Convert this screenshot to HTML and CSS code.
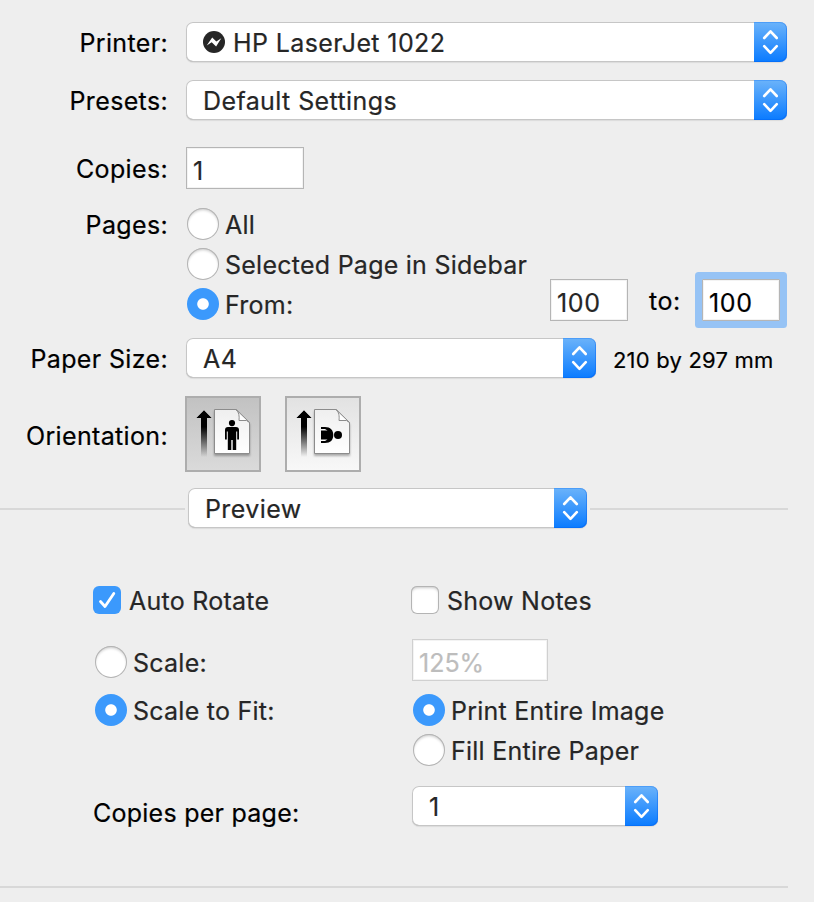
FILE: index.html
```html
<!DOCTYPE html>
<html lang="en">

<head>
    <meta charset="UTF-8">
    <meta name="viewport" content="width=device-width, initial-scale=1.0">
    <title>Print</title>
    <link rel="stylesheet" href="styles.css">
</head>

<body>

    <!-- Shared shapes -->
    <svg class="defs" width="0" height="0">
        <defs>
            <linearGradient id="fade" x1="0" y1="0" x2="0" y2="1">
                <stop offset="0.35" stop-color="#000"/>
                <stop offset="1" stop-color="#000" stop-opacity="0"/>
            </linearGradient>
            <linearGradient id="paper" x1="0" y1="0" x2="0" y2="1">
                <stop offset="0" stop-color="#efefef"/>
                <stop offset="1" stop-color="#fff"/>
            </linearGradient>
            <symbol id="arrows" viewBox="0 0 33 40">
                <path d="M10.2 16 L16.5 9.3 L22.8 16 M10.2 24.2 L16.5 30.9 L22.8 24.2" fill="none" stroke="#fff" stroke-width="2.6" stroke-linecap="round" stroke-linejoin="round"/>
            </symbol>
            <symbol id="page" viewBox="0 0 72 72">
                <path d="M17 12.5 L24.5 20 H20 V59 H14 V20 H9.5 Z" fill="url(#fade)"/>
                <path d="M9.7 20 L17 12.5 L24.3 20 Z"/>
                <path class="sheet" d="M27.5 11.5 H49 L62.5 24.5 V55.5 H27.5 Z" fill="url(#paper)" stroke="#8c8c8c"/>
                <path d="M49 11.5 C52 14 52.5 18 52 22.5 H59.5 L62.5 24.5 Z" fill="#fff" stroke="#8c8c8c" stroke-linejoin="round"/>
            </symbol>
            <symbol id="person" viewBox="0 0 14 30">
                <circle cx="7" cy="3.1" r="3.1"/>
                <path d="M3 7 H11 Q14 7 14 10 V19.5 H12.2 V11.5 H11.2 V30 H7.7 V20 H6.3 V30 H2.8 V11.5 H1.8 V19.5 H0 V10 Q0 7 3 7 Z"/>
            </symbol>
        </defs>
    </svg>

    <form class="dialog">
        <div class="row printer">
            <span class="label">Printer:</span>
            <div class="popup wide">
                <svg class="badge" width="22" height="22" viewBox="0 0 22 22">
                    <circle cx="11" cy="11" r="11" fill="#262626"/>
                    <path d="M3.7 14.4 L9.2 6.4 L13.3 10.4 L18.3 7.3 L13.1 15.5 L8.7 11.3 Z" fill="#fff"/>
                </svg>
                <span class="value">HP LaserJet 1022</span>
                <svg class="cap"><use href="#arrows"/></svg>
            </div>
        </div>

        <div class="row presets">
            <span class="label">Presets:</span>
            <div class="popup wide">
                <span class="value">Default Settings</span>
                <svg class="cap"><use href="#arrows"/></svg>
            </div>
        </div>

        <div class="row copies">
            <span class="label">Copies:</span>
            <input type="text" class="field copies-field" value="1">
        </div>

        <div class="row pages">
            <span class="label">Pages:</span>
            <div class="choices">
                <label class="choice"><input type="radio" name="pages"><span>All</span></label>
                <label class="choice selected-page"><input type="radio" name="pages"><span>Selected Page in Sidebar</span></label>
                <div class="range">
                    <label class="choice"><input type="radio" name="pages" checked><span>From:</span></label>
                    <input type="text" class="field range-field" value="100">
                    <span class="to">to:</span>
                    <input type="text" class="field range-field focused" value="100">
                </div>
            </div>
        </div>

        <div class="row paper">
            <span class="label">Paper Size:</span>
            <div class="popup paper-popup">
                <span class="value">A4</span>
                <svg class="cap"><use href="#arrows"/></svg>
            </div>
            <span class="size">210 by 297 mm</span>
        </div>

        <div class="row orientation">
            <span class="label">Orientation:</span>
            <button type="button" class="orient active">
                <svg width="72" height="72" viewBox="0 0 72 72">
                    <use href="#page"/>
                    <use href="#person" x="38" y="22" width="14" height="30"/>
                </svg>
            </button>
            <button type="button" class="orient">
                <svg width="72" height="72" viewBox="0 0 72 72">
                    <use href="#page"/>
                    <circle cx="51" cy="37" r="4"/>
                    <path d="M34 29 H38 C43.5 29 46.3 32 46.3 37 C46.3 42 43.5 45 38 45 H34 V43 H38 L40.5 41.4 H34 V32.6 H40.5 L38 31 H34 Z"/>
                </svg>
            </button>
        </div>

        <div class="divider">
            <span class="line line-left"></span>
            <div class="popup pane-popup">
                <span class="value">Preview</span>
                <svg class="cap"><use href="#arrows"/></svg>
            </div>
            <span class="line line-right"></span>
        </div>

        <div class="options">
            <div class="left">
                <label class="choice check"><input type="checkbox" checked><svg class="tick" viewBox="0 0 28 28"><path d="M7.5 15.5 L12 20.5 L20.8 7.5"/></svg><span>Auto Rotate</span></label>
                <label class="choice scale"><input type="radio" name="scale"><span>Scale:</span></label>
                <label class="choice fit"><input type="radio" name="scale" checked><span>Scale to Fit:</span></label>
                <span class="per-page">Copies per page:</span>
            </div>
            <div class="right">
                <label class="choice check"><input type="checkbox"><span>Show Notes</span></label>
                <input type="text" class="field scale-field" value="125%" disabled>
                <label class="choice entire"><input type="radio" name="fill" checked><span>Print Entire Image</span></label>
                <label class="choice fill"><input type="radio" name="fill"><span>Fill Entire Paper</span></label>
                <div class="popup count-popup">
                    <span class="value">1</span>
                    <svg class="cap"><use href="#arrows"/></svg>
                </div>
            </div>
        </div>

        <div class="footer-line"></div>
    </form>

</body>

</html>
```
FILE: styles.css
```css
* {
    box-sizing: border-box;
}

body {
    margin: 0;
    background-color: #eeeeee;
    color: #262626;
    font-family: Inter, "Liberation Sans", sans-serif;
    font-size: 25px;
    line-height: 30px;
    letter-spacing: 0.25px;
    white-space: nowrap;
    -webkit-text-stroke: 0.2px;
}

.defs {
    display: block;
}

.dialog {
    width: 814px;
    height: 902px;
    padding-top: 22px;
    overflow: hidden;
}

.row {
    display: flex;
    align-items: center;
}

.label {
    width: 168px;
    margin-right: 18px;
    padding-top: 2px;
    text-align: right;
    letter-spacing: 0.35px;
    color: #000;
}

/* Pop-up menus */
.popup {
    display: flex;
    align-items: center;
    height: 40px;
    padding-left: 17px;
    background-color: #fff;
    border-radius: 7px;
    box-shadow: inset 0 0 0 1px #c6c6c6, inset 0 -1px 0 #b0b0b0, 0 1px 1px rgba(0, 0, 0, 0.08);
}

.popup .value {
    flex: 1;
    padding-top: 2px;
    letter-spacing: 0.4px;
}

.cap {
    width: 33px;
    height: 40px;
    border-radius: 0 7px 7px 0;
    background: linear-gradient(#6bb3fa, #0a7bff);
    box-shadow: inset 0 1px 0 rgba(45, 135, 245, 0.5), inset -1px -1px 0 rgba(0, 95, 240, 0.4);
}

.badge {
    margin-right: 8px;
}

.wide {
    width: 601px;
}

.presets {
    margin-top: 18px;
}

/* Text fields */
.field {
    height: 42px;
    padding: 5px 6px 0;
    border: 1px solid #b5b5b5;
    border-radius: 0;
    background-color: #fff;
    box-shadow: inset 0 0 0 1px #f3f3f3;
    color: #262626;
    font: inherit;
    letter-spacing: 0.7px;
    outline: none;
}

.copies {
    margin-top: 27px;
}

.copies-field {
    width: 118px;
}

.pages {
    align-items: flex-start;
    margin-top: 19px;
}

.choice {
    display: flex;
    align-items: center;
    height: 32px;
}

.choice span {
    padding-top: 2px;
}

.choice input {
    appearance: none;
    flex: none;
    width: 32px;
    height: 32px;
    margin: 0 6px 0 1px;
    border-radius: 50%;
    background-color: #fff;
    box-shadow: inset 0 0 0 1px #b4b4b4, inset 0 2px 3px rgba(0, 0, 0, 0.22);
}

.choice input[type="radio"]:checked {
    background: radial-gradient(circle, #fff 5.3px, #3b99fc 6.2px);
    box-shadow: none;
}

.check {
    position: relative;
    height: 28px;
}

.choice input[type="checkbox"] {
    width: 28px;
    height: 28px;
    margin: 0 8px 0 0;
    border-radius: 6px;
}

.choice input[type="checkbox"]:checked {
    background-color: #3b99fc;
    box-shadow: none;
}

/* Check mark lies over the box */
.tick {
    position: absolute;
    left: 0;
    top: 0;
    width: 28px;
    height: 28px;
    fill: none;
    stroke: #fff;
    stroke-width: 2.8;
    stroke-linecap: round;
    stroke-linejoin: round;
}

.selected-page {
    margin-top: 8px;
}

.range {
    display: flex;
    align-items: center;
    width: 601px;
    height: 42px;
}

.range .choice {
    width: 364px;
    height: 38px;
    padding-top: 6px;
}

.range-field {
    width: 78px;
    margin-top: -2px;
}

.to {
    width: 74px;
    padding-left: 21px;
    letter-spacing: 0.6px;
    color: #000;
}

.focused {
    color: #000;
    box-shadow: inset 0 0 0 1px #f3f3f3, 0 0 0 7px #96c3f5;
    border-radius: 1px;
}

.paper {
    margin-top: 16px;
}

.paper-popup {
    width: 410px;
}

.size {
    margin-left: 17px;
    padding-top: 4px;
    font-size: 22px;
    letter-spacing: 0.2px;
    color: #000;
}

/* Orientation */
.orientation {
    margin-top: 18px;
}

.orientation .label {
    margin-right: 17px;
    padding-top: 4px;
}

.orient {
    width: 76px;
    height: 76px;
    margin-right: 24px;
    padding: 0;
    border: 2px solid #adadad;
    background: linear-gradient(#e2e2e2, #f8f8f8);
}

.orient svg {
    display: block;
}

.orient.active {
    background: linear-gradient(#c2c2c2, #dadada);
}

.sheet {
    filter: drop-shadow(0 2px 1px rgba(0, 0, 0, 0.3));
}

.divider {
    display: flex;
    align-items: center;
    margin-top: 16px;
}

.line {
    height: 2px;
    margin-top: 2px;
    background-color: #d8d8d8;
}

.line-left {
    width: 185px;
    margin-right: 3px;
}

.line-right {
    width: 198px;
    margin-left: 3px;
}

.pane-popup {
    width: 399px;
}

/* Preview options */
.options {
    display: flex;
    height: 358px;
    padding: 58px 0 0 93px;
}

.left {
    width: 318px;
}

.left .choice.scale,
.left .choice.fit {
    padding-left: 1px;
}

.scale {
    margin-top: 32px;
}

.fit {
    margin-top: 16px;
}

.per-page {
    display: block;
    margin-top: 72px;
    color: #000;
}

.scale-field {
    display: block;
    width: 136px;
    margin: 25px 0 0 1px;
    border-color: #d0d0d0;
    letter-spacing: 0;
    color: #bdbdbd;
}

.entire {
    margin-top: 13px;
    padding-left: 1px;
}

.fill {
    margin-top: 8px;
    padding-left: 1px;
}

.count-popup {
    width: 246px;
    margin: 20px 0 0 1px;
}

.footer-line {
    width: 788px;
    height: 2px;
    background-color: #d8d8d8;
}
```
